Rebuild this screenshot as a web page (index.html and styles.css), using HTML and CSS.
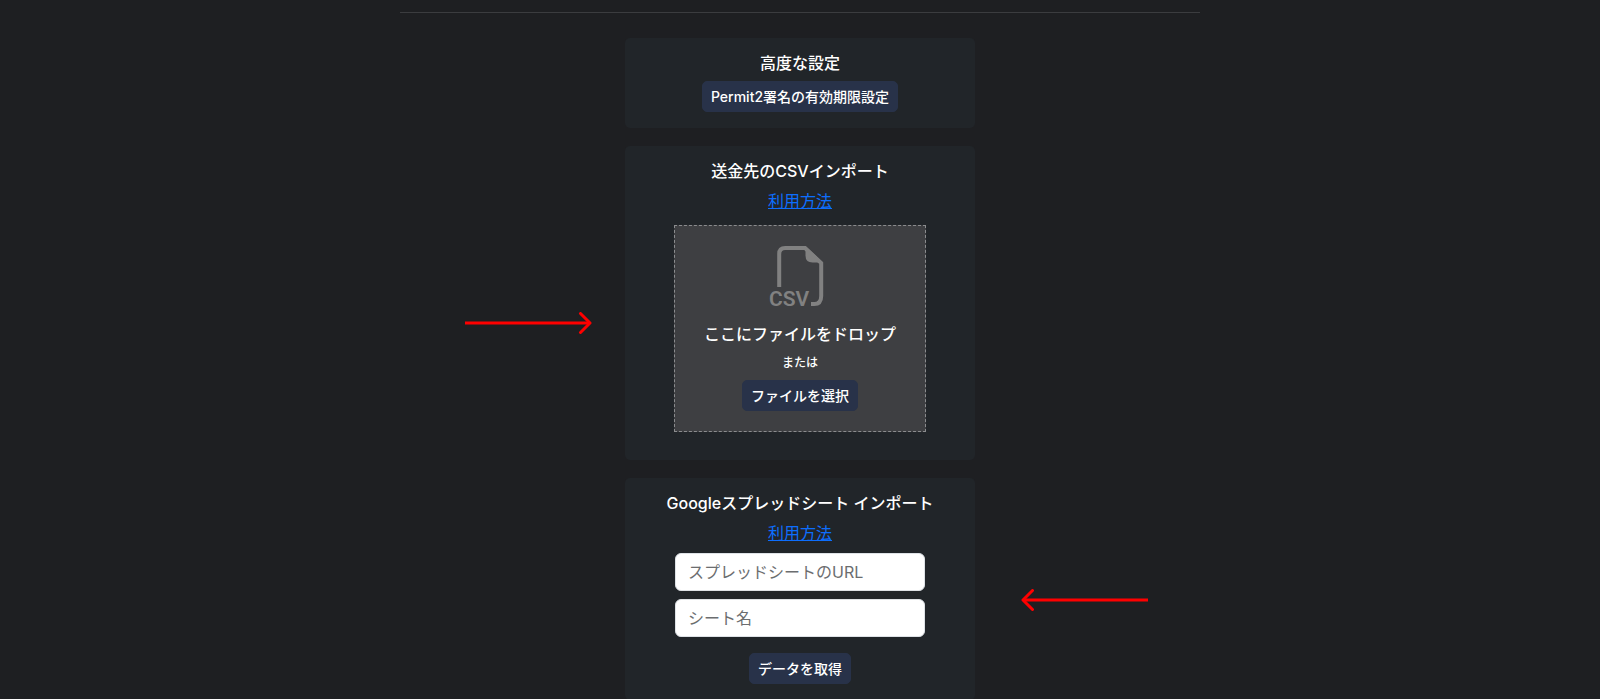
FILE: index.html
```html
<!DOCTYPE html>
<html lang="ja">
<head>
<meta charset="utf-8">
<meta name="viewport" content="width=device-width, initial-scale=1">
<title>送金先のインポート</title>
<link rel="stylesheet" href="styles.css">
</head>
<body>
<main class="page">
  <hr class="divider">

  <section class="card">
    <h2 class="card-title">高度な設定</h2>
    <button class="btn" type="button">Permit2署名の有効期限設定</button>
  </section>

  <section class="card card-csv">
    <h2 class="card-title">送金先のCSVインポート</h2>
    <a class="link" href="#">利用方法</a>
    <div class="dropzone">
      <svg class="file-icon" viewBox="0 0 60 60" aria-hidden="true">
        <path class="file-outline" d="M9.200 41V8Q9.200 2 15.200 2H35L51.200 17V50Q51.200 58 44.200 58H41"/>
        <path class="file-fold" d="M35.500 0L53 16.500H42.500Q35.500 16.500 35.500 9.500Z"/>
        <text class="file-type" x="-1" y="60">CSV</text>
      </svg>
      <p class="drop-title">ここにファイルをドロップ</p>
      <p class="drop-or">または</p>
      <button class="btn" type="button">ファイルを選択</button>
    </div>
    <svg class="arrow arrow-right" viewBox="0 0 127 22" aria-hidden="true">
      <path d="M0 11H125"/>
      <path class="arrow-head" d="M115.500 1.500L125 11L115.500 20.500"/>
    </svg>
  </section>

  <section class="card">
    <h2 class="card-title">Googleスプレッドシート インポート</h2>
    <a class="link" href="#">利用方法</a>
    <form class="sheet-form">
      <input class="field" type="text" placeholder="スプレッドシートのURL" aria-label="スプレッドシートのURL">
      <input class="field" type="text" placeholder="シート名" aria-label="シート名">
      <button class="btn btn-submit" type="button">データを取得</button>
    </form>
    <svg class="arrow arrow-left" viewBox="0 0 127 22" aria-hidden="true">
      <path d="M127 11H2"/>
      <path class="arrow-head" d="M11.500 1.500L2 11L11.500 20.500"/>
    </svg>
  </section>
</main>
</body>
</html>
```
FILE: styles.css
```css
*, *::before, *::after {
  box-sizing: border-box;
}

body {
  margin: 0;
  background: #1e1f22;
  color: #fff;
  font-family: Inter, "Noto Sans CJK JP", sans-serif;
  font-size: 16px;
  line-height: 24px;
}

.page {
  display: flex;
  flex-direction: column;
  align-items: center;
  gap: 18px;
  padding-top: 12px;
}

.divider {
  width: 100%;
  max-width: 800px;
  margin: 0 0 7px;
  border: 0;
  border-top: 1px solid #3b3c3f;
}

.card {
  position: relative;
  display: flex;
  flex-direction: column;
  align-items: center;
  width: 100%;
  max-width: 350px;
  padding: 16px;
  border-radius: 5px;
  background: #212529;
}

.card-csv {
  padding-bottom: 28px;
}

.card-title {
  margin: 0 0 8px;
  font-size: 16px;
  font-weight: 500;
  line-height: 19px;
}

.link {
  color: #0d6efd;
  text-decoration: underline;
}

.btn {
  padding: 4px 8px;
  border: 1px solid #283249;
  border-radius: 5px;
  background: #283249;
  color: #fff;
  font-family: inherit;
  font-size: 14px;
  font-weight: 500;
  line-height: 21px;
  cursor: pointer;
}

.dropzone {
  display: flex;
  flex-direction: column;
  align-items: center;
  width: 100%;
  max-width: 252px;
  margin-top: 12px;
  padding: 20px;
  border: 1px dashed #8b8c8e;
  background: #3e3f42;
}

.file-icon {
  width: 60px;
  height: 60px;
  overflow: visible;
}

.file-outline {
  fill: none;
  stroke: #818181;
  stroke-width: 4;
}

.file-fold {
  fill: #818181;
}

.file-type {
  fill: #818181;
  font-family: Roboto, sans-serif;
  font-size: 21px;
  font-weight: 600;
}

.drop-title {
  margin: 16px 0 8px;
  font-weight: 500;
  white-space: nowrap;
}

.drop-or {
  margin: 0 0 8px;
  font-size: 12px;
  font-weight: 500;
  line-height: 18px;
}

.sheet-form {
  display: flex;
  flex-direction: column;
  align-items: center;
  gap: 8px;
  width: 100%;
  max-width: 250px;
  margin-top: 8px;
}

.field {
  width: 100%;
  height: 38px;
  padding: 6px 12px;
  border: 1px solid #dee2e6;
  border-radius: 6px;
  background: #fff;
  color: #212529;
  font-family: inherit;
  font-size: 16px;
  line-height: 24px;
}

.field::placeholder {
  color: #6b6d6f;
  opacity: 1;
}

.btn-submit {
  margin-top: 8px;
}

.arrow {
  position: absolute;
  width: 127px;
  height: 22px;
  fill: none;
  stroke: #f00;
  stroke-width: 3;
}

.arrow-head {
  stroke-linecap: round;
  stroke-linejoin: round;
}

.arrow-right {
  top: 166px;
  right: calc(100% + 33px);
}

.arrow-left {
  top: 111px;
  left: calc(100% + 46px);
}
```
